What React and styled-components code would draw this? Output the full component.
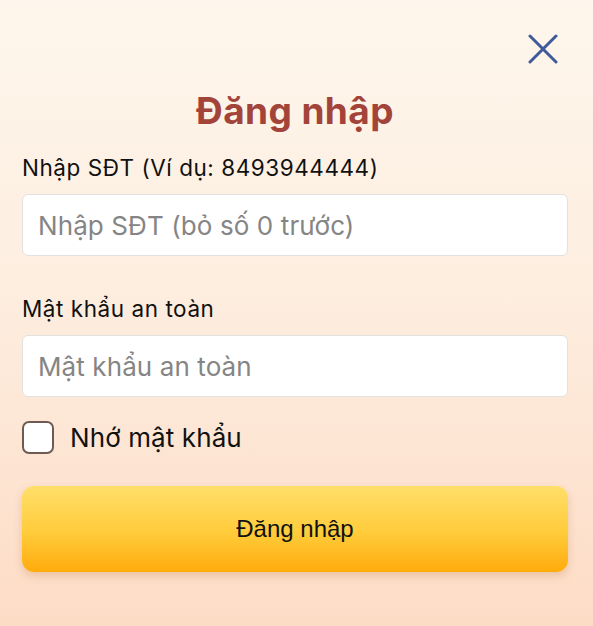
import React from "react";
import styled, { createGlobalStyle } from "styled-components";

const GlobalStyle = createGlobalStyle`
  html, body {
    margin: 0;
    padding: 0;
  }
  body {
    font-family: Inter, "Liberation Sans", Arial, sans-serif;
    background: #fde3cf;
  }
  * {
    box-sizing: border-box;
  }
`;

const Page = styled.div`
  width: 593px;
  height: 626px;
  display: flex;
  flex-direction: column;
  padding: 34px 25px 0 22px;
  background: linear-gradient(to bottom, #fef6ec 0%, #fdeee0 45%, #fddcc6 100%);
`;

const TopBar = styled.div`
  display: flex;
  justify-content: flex-end;
  padding-right: 10px;
`;

const CloseButton = styled.button`
  width: 30px;
  height: 30px;
  padding: 0;
  border: none;
  background: none;
  cursor: pointer;
  display: flex;
  align-items: center;
  justify-content: center;
`;

const Title = styled.h1`
  margin: 26px 0 0;
  text-align: center;
  font-family: Inter, "Liberation Sans", Arial, sans-serif;
  font-size: 37px;
  letter-spacing: 0.4px;
  line-height: 42px;
  font-weight: 700;
  color: #a2443a;
`;

const Label = styled.label`
  display: block;
  margin-top: ${p => p.$top}px;
  font-size: 22.5px;
  letter-spacing: 0.55px;
  line-height: 26px;
  color: #111;
`;

const Input = styled.input`
  display: block;
  width: 100%;
  height: 62px;
  margin-top: 13px;
  padding: 0 15px;
  border: 1px solid #e3e1de;
  border-radius: 6px;
  background: #fff;
  font-family: Inter, "Liberation Sans", Arial, sans-serif;
  font-size: 26px;
  letter-spacing: 0.1px;
  color: #222;
  outline: none;

  &::placeholder {
    color: #858585;
  }
`;

const CheckRow = styled.label`
  display: flex;
  align-items: center;
  gap: 16px;
  margin-top: 24px;
  font-size: 26px;
  letter-spacing: 0.1px;
  color: #111;
  cursor: pointer;
`;

const Box = styled.span`
  width: 32px;
  height: 33px;
  border: 2px solid #6e5c52;
  border-radius: 7px;
  background: #fff;
`;

const SubmitButton = styled.button`
  width: 100%;
  height: 86px;
  margin-top: 32px;
  border: none;
  border-radius: 12px;
  background: linear-gradient(to bottom, #ffdf6a 0%, #ffcb3a 55%, #ffab0c 100%);
  box-shadow: 0 4px 8px rgba(180, 110, 40, 0.25);
  font-family: "Liberation Sans", Arial, sans-serif;
  font-size: 24px;
  color: #111;
  cursor: pointer;
`;

const CloseIcon = () => (
  <svg width="30" height="30" viewBox="0 0 30 30" fill="none">
    <path
      d="M2 2 L28 28 M28 2 L2 28"
      stroke="#3f5a9a"
      strokeWidth="3"
      strokeLinecap="round"
    />
  </svg>
);

export default function App() {
  return (
    <>
      <GlobalStyle />
      <Page>
        <TopBar>
          <CloseButton aria-label="Đóng">
            <CloseIcon />
          </CloseButton>
        </TopBar>
        <Title>Đăng nhập</Title>
        <Label $top={23}>Nhập SĐT (Ví dụ: 8493944444)</Label>
        <Input placeholder="Nhập SĐT (bỏ số 0 trước)" />
        <Label $top={40}>Mật khẩu an toàn</Label>
        <Input type="password" placeholder="Mật khẩu an toàn" />
        <CheckRow>
          <Box />
          Nhớ mật khẩu
        </CheckRow>
        <SubmitButton>Đăng nhập</SubmitButton>
      </Page>
    </>
  );
}
